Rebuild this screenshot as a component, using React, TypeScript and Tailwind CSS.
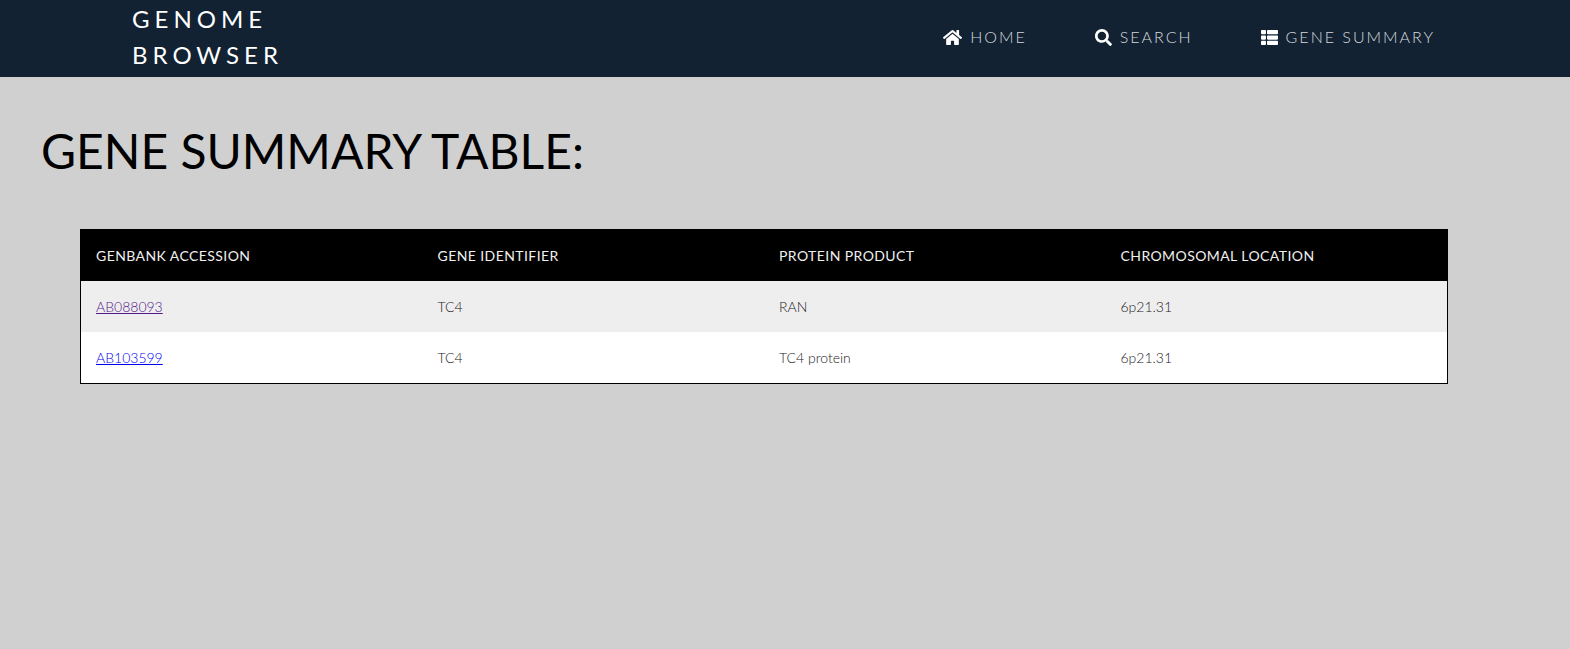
import React from "react";
import { FaHome, FaSearch, FaThList } from "react-icons/fa";

const links = [
  { label: "HOME", icon: FaHome, size: "h-[17px] w-[19px]" },
  { label: "SEARCH", icon: FaSearch, size: "h-[17px] w-[17px]" },
  { label: "GENE SUMMARY", icon: FaThList, size: "h-[17px] w-[17px]" },
];

const columns = ["GENBANK ACCESSION", "GENE IDENTIFIER", "PROTEIN PRODUCT", "CHROMOSOMAL LOCATION"];

const genes = [
  { accession: "AB088093", identifier: "TC4", protein: "RAN", location: "6p21.31", visited: true },
  { accession: "AB103599", identifier: "TC4", protein: "TC4 protein", location: "6p21.31", visited: false },
];

export default function App() {
  return (
    <div className="min-h-screen bg-[#d0d0d0] font-['Lato',sans-serif] text-black">
      <header className="flex items-center justify-between bg-[#122233] pt-px pb-[4px] pr-[135px] pl-[132px] text-white">
        <a href="#" className="w-[160px] text-[24px] leading-[36px] tracking-[5px]">
          GENOME BROWSER
        </a>
        <nav>
          <ul className="flex gap-[68px]">
            {links.map(({ label, icon: Icon, size }) => (
              <li key={label}>
                <a href="#" className="flex items-center gap-[8px] text-[16px] leading-[24px] font-light tracking-[2px] text-[#d4d8dc]">
                  <Icon className={`${size} text-white`} aria-hidden="true" />
                  {label}
                </a>
              </li>
            ))}
          </ul>
        </nav>
      </header>
      <main className="pt-[36px] pr-[122px] pl-[41px]">
        <h1 className="text-[48px] leading-[76px]">GENE SUMMARY TABLE:</h1>
        <div className="mt-[40px] ml-[39px] border border-black">
          <table className="w-full table-fixed border-collapse text-left text-[14px] leading-[21px]">
            <thead className="bg-black text-[#f0f0f0]">
              <tr>
                {columns.map((c) => (
                  <th key={c} scope="col" className="p-[15px] font-normal tracking-[0.03em]">
                    {c}
                  </th>
                ))}
              </tr>
            </thead>
            <tbody className="font-light text-[#222222]">
              {genes.map((g) => (
                <tr key={g.accession} className="bg-white odd:bg-[#eeeeee]">
                  <td className="p-[15px]">
                    <a href="#" className={g.visited ? "text-[#551a8b] underline" : "text-[#0000ee] underline"}>
                      {g.accession}
                    </a>
                  </td>
                  <td className="p-[15px]">{g.identifier}</td>
                  <td className="p-[15px]">{g.protein}</td>
                  <td className="p-[15px]">{g.location}</td>
                </tr>
              ))}
            </tbody>
          </table>
        </div>
      </main>
    </div>
  );
}
